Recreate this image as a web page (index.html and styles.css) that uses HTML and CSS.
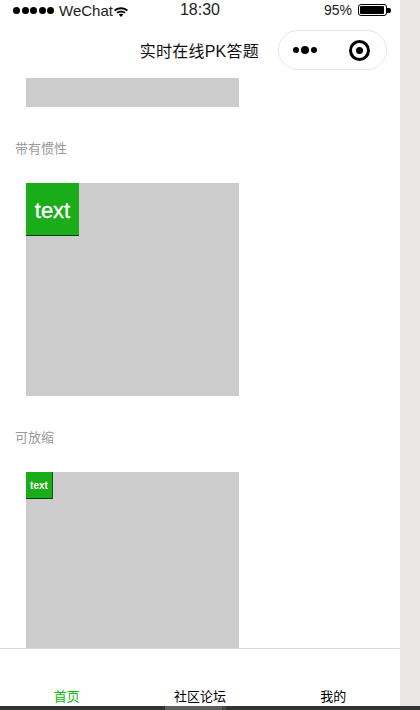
FILE: index.html
```html
<!DOCTYPE html>
<html lang="zh-CN">
<head>
    <meta charset="UTF-8">
    <meta name="viewport" content="width=device-width, initial-scale=1.0">
    <title>实时在线PK答题</title>
    <link rel="stylesheet" href="styles.css">
</head>
<body>
    <div class="window">
        <div class="phone">
            <div class="status-bar">
                <div class="status-left">
                    <span class="signal">
                        <i></i><i></i><i></i><i></i><i></i>
                    </span>
                    <span class="carrier">WeChat</span>
                    <svg class="wifi" width="14" height="10" viewBox="0 0 14 10">
                        <path d="M0 2.9C3.8 -0.6 10.2 -0.6 14 2.9L12.8 4.2C9.6 1.5 4.4 1.5 1.2 4.2Z" fill="#000"/>
                        <path d="M2.4 5.2C4.8 3.2 9.2 3.2 11.6 5.2L10.4 6.5C8.5 5 5.5 5 3.6 6.5Z" fill="#000"/>
                        <path d="M4.7 7.5C6 6.5 8 6.5 9.3 7.5L7 10Z" fill="#000"/>
                    </svg>
                </div>
                <div class="status-time">18:30</div>
                <div class="status-right">
                    <span class="percent">95%</span>
                    <span class="battery"><span class="battery-level"></span></span>
                    <span class="battery-tip"></span>
                </div>
            </div>

            <div class="nav-bar">
                <div class="nav-title">实时在线PK答题</div>
                <div class="capsule">
                    <span class="capsule-dots">
                        <i></i><i class="big"></i><i></i>
                    </span>
                    <span class="capsule-target"></span>
                </div>
            </div>

            <div class="content">
                <div class="area area-cut"></div>

                <div class="section-title">带有惯性</div>
                <div class="area">
                    <div class="movable">text</div>
                </div>

                <div class="section-title">可放缩</div>
                <div class="area">
                    <div class="movable movable-small">text</div>
                </div>
            </div>

            <div class="tab-bar">
                <div class="tab tab-active">首页</div>
                <div class="tab">社区论坛</div>
                <div class="tab">我的</div>
            </div>
        </div>
        <div class="gutter"></div>
    </div>
    <div class="h-scroll">
        <div class="h-scroll-thumb"></div>
    </div>
</body>
</html>
```

FILE: styles.css
```css
* {
    margin: 0;
    padding: 0;
    box-sizing: border-box;
}

html, body {
    height: 100%;
    overflow: hidden;
}

body {
    display: flex;
    flex-direction: column;
    font-family: "Liberation Sans", "Noto Sans CJK SC", sans-serif;
    background: #fff;
    color: #000;
}

.window {
    flex: 1;
    min-height: 0;
    display: flex;
}

.phone {
    width: 400px;
    display: flex;
    flex-direction: column;
    background: #fff;
}

.gutter {
    flex: 1;
    background: #e8e7e3;
}

/* status bar */
.status-bar {
    height: 20px;
    flex-shrink: 0;
    display: grid;
    grid-template-columns: 1fr auto 1fr;
    align-items: center;
    padding: 0 9px 0 13px;
    font-size: 15px;
    color: #222;
}

.status-left {
    display: flex;
    align-items: center;
}

.signal {
    display: flex;
    gap: 1.5px;
    margin-right: 5px;
}

.signal i {
    width: 7px;
    height: 7px;
    border-radius: 50%;
    background: #000;
}

.wifi {
    margin: 4px 0 0 1px;
}

.status-time {
    font-size: 16px;
    padding-right: 4px;
}

.status-right {
    display: flex;
    align-items: center;
    justify-content: flex-end;
}

.percent {
    font-size: 14px;
    margin-right: 6px;
}

.battery {
    width: 29px;
    height: 12px;
    border: 1px solid #000;
    border-radius: 3px;
    padding: 1px;
    display: flex;
}

.battery-level {
    width: 24px;
    background: #000;
    border-radius: 1px;
}

.battery-tip {
    width: 4px;
    height: 5px;
    background: #000;
    border-radius: 0 2px 2px 0;
}

/* nav bar */
.nav-bar {
    height: 58px;
    flex-shrink: 0;
    display: flex;
    align-items: center;
    justify-content: flex-end;
    padding: 2px 13px 0 0;
}

.nav-title {
    font-size: 16px;
    letter-spacing: 0.25px;
    color: #111;
    margin-right: 19px;
}

.capsule {
    width: 109px;
    height: 40px;
    border: 1px solid #e6e6e6;
    border-radius: 20px;
    display: flex;
    align-items: center;
    justify-content: space-between;
    padding: 0 16px 0 14px;
}

.capsule-dots {
    display: flex;
    align-items: center;
    gap: 2px;
}

.capsule-dots i {
    width: 6px;
    height: 6px;
    border-radius: 50%;
    background: #000;
}

.capsule-dots .big {
    width: 8px;
    height: 8px;
}

.capsule-target {
    width: 21px;
    height: 21px;
    border: 3px solid #000;
    border-radius: 50%;
    display: flex;
    align-items: center;
    justify-content: center;
}

.capsule-target::after {
    content: "";
    width: 7px;
    height: 7px;
    border-radius: 50%;
    background: #000;
}

/* scrolling content */
.content {
    flex: 1;
    min-height: 0;
    overflow: hidden;
}

.area {
    width: 213px;
    height: 213px;
    margin-left: 26px;
    background: #ccc;
}

.area-cut {
    height: 29px;
}

.section-title {
    height: 76px;
    padding: 33px 0 0 15px;
    font-size: 13px;
    line-height: 17px;
    color: #999;
}

.movable {
    width: 53px;
    height: 53px;
    display: flex;
    align-items: center;
    justify-content: center;
    padding-top: 3px;
    background: #1aad19;
    border-bottom: 1px solid #0a3a0a;
    color: #fff;
    font-size: 22px;
    -webkit-text-stroke: 0.3px #fff;
}

.movable-small {
    width: 27px;
    height: 27px;
    padding-top: 1px;
    border-right: 1px solid #0d5c0c;
    font-size: 10px;
    font-weight: bold;
    -webkit-text-stroke: 0;
}

/* tab bar */
.tab-bar {
    height: 58px;
    flex-shrink: 0;
    display: grid;
    grid-template-columns: repeat(3, 1fr);
    align-items: end;
    border-top: 1px solid #d9d9d9;
    background: #fff;
}

.tab {
    text-align: center;
    font-size: 13px;
    line-height: 17px;
    padding-bottom: 1px;
    color: #000;
}

.tab-active {
    color: #09bb07;
}

/* window scrollbar */
.h-scroll {
    height: 4px;
    flex-shrink: 0;
    background: #333;
}

.h-scroll-thumb {
    width: 61px;
    height: 4px;
    margin-left: 165px;
    background: #5f5f5f;
    border-right: 4px solid #484848;
}
```
